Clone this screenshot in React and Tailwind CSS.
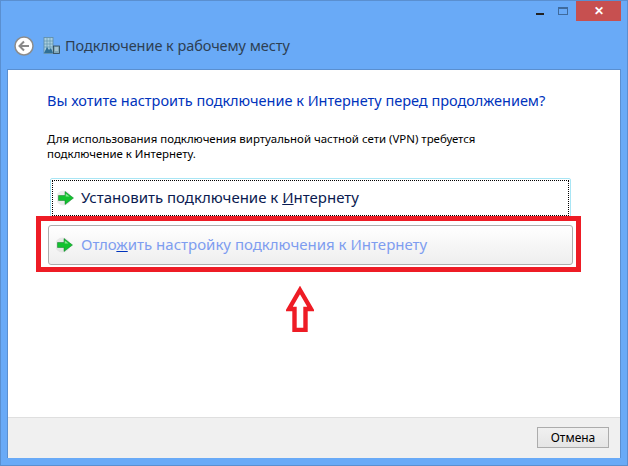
const GreenArrow = () => (
  <svg width="18" height="18" viewBox="0 0 18 18" className="shrink-0">
    <circle cx="6.5" cy="9" r="7.5" fill="#cfcfcf" opacity="0.4" />
    <path d="M1.5 6.5H8V2.5L16.5 9 8 15.5v-4H1.5z" fill="#12c22e" stroke="#0d7a26" strokeWidth="0.5" />
    <path d="M2.5 7.4h6.2V4.4L12.5 7.4z" fill="#a4f2aa" opacity="0.8" />
  </svg>
);

const BackButton = () => (
  <svg width="20" height="20" viewBox="0 0 20 20" className="shrink-0">
    <circle cx="10" cy="10" r="9" fill="#ffffff" stroke="#8c8c8c" strokeWidth="1.5" />
    <path d="M15 10H6M10 5.5 5.5 10l4.5 4.5" fill="none" stroke="#8a8a8a" strokeWidth="2" />
  </svg>
);

const WorkplaceIcon = () => (
  <svg width="17" height="17" viewBox="0 0 17 17" className="shrink-0">
    <rect x="1" y="0.5" width="9" height="16" fill="#a9cfe0" stroke="#5f8ca3" strokeWidth="0.8" />
    <path d="M4 1v15M7 1v15M1 4h9M1 7h9M1 10h9" stroke="#5f93ad" strokeWidth="0.7" />
    <path d="M1 16l3-6 2 3 2-2 2 5z" fill="#2f6f96" />
    <rect x="10.5" y="9" width="6" height="7.5" fill="#7fa8ba" stroke="#30444f" strokeWidth="0.8" />
    <path d="M12 11h3M12 13h3" stroke="#dfeef5" strokeWidth="0.8" />
  </svg>
);

const RedArrow = () => (
  <svg width="28" height="46" viewBox="0 0 28 46" className="absolute left-[285px] top-[285px]">
    <path d="M14 4 25 23H19.5V44H8.5V23H3z" fill="#ffffff" stroke="#ee1c25" strokeWidth="4.4" />
  </svg>
);

export default function App() {
  return (
    <div className="relative w-[628px] h-[466px] flex flex-col bg-[#69aaf7] border border-[#5a8fd0] font-['Noto_Sans',sans-serif] overflow-hidden">
      {/* title bar */}
      <div className="h-[21px] flex justify-end pr-[6px] shrink-0">
        <div className="w-[14px] mr-[8px] flex items-start pt-[12px]">
          <div className="w-[8px] h-[2px] bg-[#222222]" />
        </div>
        <div className="w-[10px] h-[8px] mt-[6px] mr-[8px] border border-[#3f6a9c] border-t-2" />
        <div className="w-[45px] h-[20px] bg-[#c75050] flex items-center justify-center text-white text-[12px] font-bold leading-none">
          ✕
        </div>
      </div>

      {/* header */}
      <div className="h-[47px] flex items-center pl-[13px] shrink-0">
        <BackButton />
        <div className="ml-[9px]">
          <WorkplaceIcon />
        </div>
        <span className="ml-[5px] text-[14.5px] text-[#2d3f53] tracking-[-0.06px]">Подключение к рабочему месту</span>
      </div>

      {/* content */}
      <div className="flex-1 mx-[6px] bg-white border-l border-r border-t border-[#5a8fd0] flex flex-col">
        <div className="flex-1 pl-[39px] pt-[20px]">
          <h1 className="text-[14.5px] leading-[20px] text-[#0033bc] font-normal tracking-[-0.01px]">
            Вы хотите настроить подключение к Интернету перед продолжением?
          </h1>
          <p className="mt-[21px] text-[11.45px] leading-[15px] text-black w-[480px]">
            Для использования подключения виртуальной частной сети (VPN) требуется подключение к Интернету.
          </p>

          <div className="mt-[17px] ml-[3px] w-[521px] h-[40px] border border-[#a9e6f5] rounded-[2px] p-px">
            <div className="h-full border border-dotted border-black flex items-center pl-[4px]">
              <GreenArrow />
              <span className="ml-[6px] -mt-[2px] text-[15px] text-[#0a1a50]">
                Установить подключение к <span className="underline">И</span>нтернету
              </span>
            </div>
          </div>

          <div className="mt-[7px] ml-[1px] w-[525px] h-[40px] border border-[#adadad] rounded-[3px] bg-gradient-to-b from-white to-[#eeeeee] flex items-center pl-[7px]">
            <GreenArrow />
            <span className="ml-[7px] -mt-[2px] text-[15px] text-[#7e9df0]">
              Отло<span className="underline decoration-[#0033bc]">ж</span>ить настройку подключения к Интернету
            </span>
          </div>
        </div>

        {/* footer */}
        <div className="h-[41px] shrink-0 bg-[#f0f0f0] border-t border-[#dfdfdf] flex items-center justify-end pr-[11px]">
          <div className="w-[72px] h-[21px] mb-[1px] border border-[#acacac] bg-gradient-to-b from-[#f0f0f0] to-[#e5e5e5] flex items-center justify-center text-[12px] text-black">
            Отмена
          </div>
        </div>
      </div>
      <div className="h-[7px] shrink-0" />

      {/* annotations */}
      <div className="absolute left-[35px] top-[215px] w-[545px] h-[56px] border-[5px] border-[#ee1c25]" />
      <RedArrow />
    </div>
  );
}
